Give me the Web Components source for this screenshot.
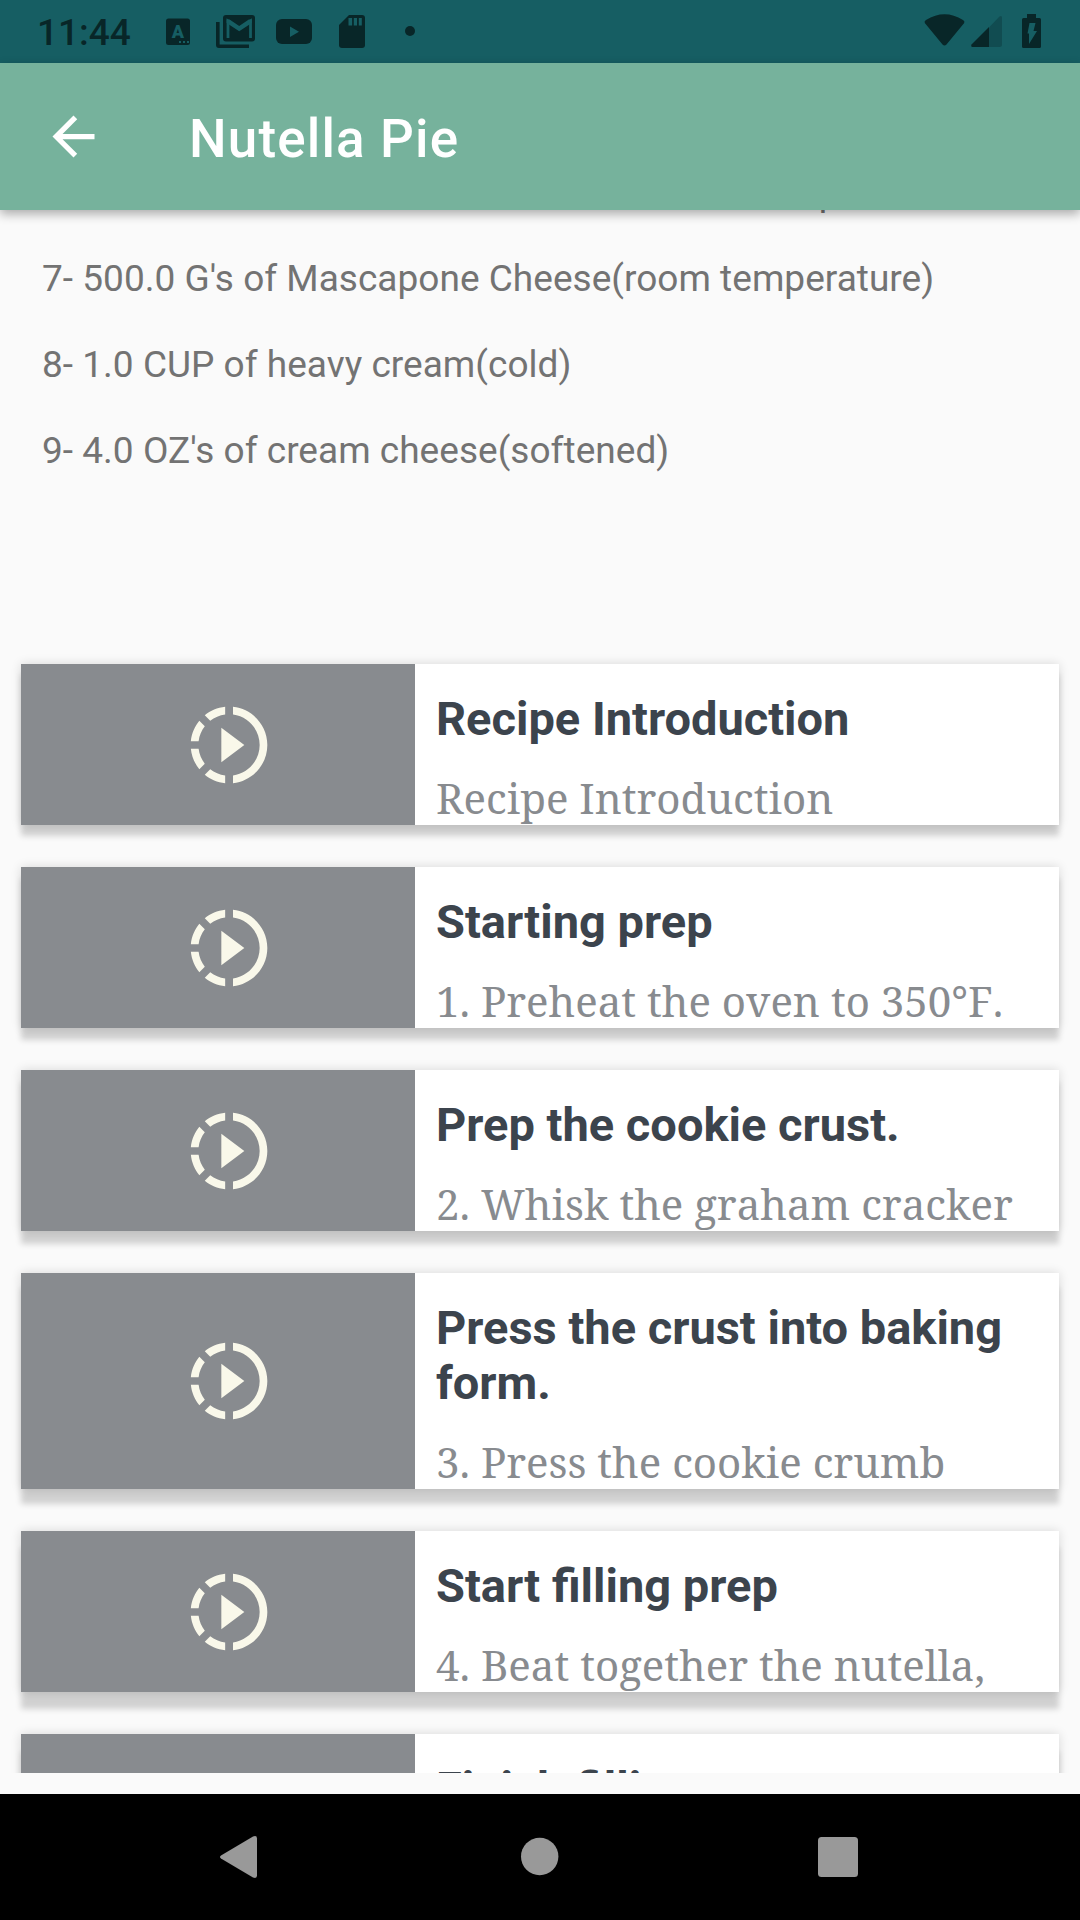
<!DOCTYPE html>
<html lang="en">
<head>
<meta charset="utf-8">
<title>Nutella Pie</title>
<style>
html,body{margin:0;padding:0;background:#fafafa;overflow:hidden}
body{width:1080px;height:1920px;font-family:Roboto,sans-serif}
</style>
</head>
<body>
<recipe-screen></recipe-screen>
<script>
const define = (name, html) => customElements.define(name, class extends HTMLElement {
  constructor() {
    super();
    const t = document.createElement('template');
    t.innerHTML = html;
    this.attachShadow({ mode: 'open' }).appendChild(t.content.cloneNode(true));
  }
});

define('status-bar', `
<style>
:host{display:flex;align-items:flex-start;height:63px;background:#165e63;box-sizing:border-box;padding-left:37px;color:#082628}
.time{width:128px;font:500 37px/43px Roboto,sans-serif;padding-top:11px;white-space:nowrap}
svg{display:block;height:63px;flex:none;fill:#082628}
.space{flex:1}
</style>
<div class="time">11:44</div>
<svg width="51" viewBox="165 0 51 63"><rect x="166" y="18.500" width="24" height="26.500" rx="2.500"/><text x="178" y="38" text-anchor="middle" font-family="Roboto" font-weight="900" font-size="18" fill="#165e63">A</text><path fill="#165e63" d="M179 41h2v2h-2zM183 41h2v2h-2zM187 41h2v2h-2z"/></svg>
<svg width="60" viewBox="216 0 60 63"><path d="M216 22h3.600v22.500H249V48H219q-3 0-3-3z"/><rect x="223" y="15" width="32" height="26.500" rx="3"/><path d="M228 38V21l11.200 7.600L250.500 21v17" fill="none" stroke="#165e63" stroke-width="2.800"/><path fill="#165e63" d="M226.600 19.500h3l9.600 6.500 9.600-6.500h3v3.500l-12.600 8.200-12.600-8.200z"/></svg>
<svg width="63" viewBox="276 0 63 63"><rect x="276" y="19" width="36" height="25" rx="6"/><path fill="#165e63" d="M290 26.500v10.500l9-5.250z"/></svg>
<svg width="66" viewBox="339 0 66 63"><path d="M349 15h13q3 0 3 3v27q0 3-3 3h-20q-3 0-3-3V25z"/><path fill="#165e63" d="M348.500 18h3.600v7.500h-3.600zM353.800 18h3.200v7.500h-3.200zM358.800 18h3v7.500h-3z"/></svg>
<svg width="12" viewBox="405 0 12 63"><circle cx="410" cy="31" r="5"/></svg>
<div class="space"></div>
<svg width="156" viewBox="924 0 156 63">
<path d="M924.800 23Q924 21 926 20Q944.500 8.500 963 20Q965 21 964.200 23L946.500 44.500q-2 2-4 0z"/>
<path opacity=".3" d="M989 27.500l10.500-11q2.500-1.500 2.500 1V44.500q0 2.500-2.500 2.500H989z"/><path d="M989 27V47H972.500q-2-.5-1-2.500z"/>
<path d="M1027 14h9v4h3.500q1.500 0 1.500 1.500v27q0 1.500-1.500 1.500h-16q-1.500 0-1.500-1.500v-27q0-1.500 1.500-1.500h3.500z"/><path fill="#165e63" d="M1029.500 23h6l-2 8h3.500l-8 13v-10.500h-1.500z"/>
</svg>`);

define('app-bar', `
<style>
:host{display:flex;align-items:center;height:147px;box-sizing:border-box;padding-left:42px;background:#76b29c;color:#fff;position:relative;z-index:2;box-shadow:0 4px 10px rgba(0,0,0,.32)}
svg{display:block;width:63px;height:63px;margin-right:84px;fill:#fff}
.t{font:500 53px/62px Roboto,sans-serif;letter-spacing:1.15px;padding-top:4px;white-space:nowrap}
</style>
<svg viewBox="0 0 24 24"><path d="M20 11H7.830l5.590-5.590L12 4l-8 8 8 8 1.410-1.410L7.830 13H20v-2z"/></svg>
<div class="t"><slot></slot></div>`);

define('ingredient-row', `
<style>:host{display:block;height:86px;font:400 37px/43px Roboto,sans-serif;letter-spacing:.025px;color:#737373;white-space:nowrap;padding-left:42px}</style><slot></slot>`);

define('step-card', `
<style>
:host{display:flex;margin:0 21px 42px;background:#fff;flex:none;box-shadow:0 var(--drop,11px) 6px rgba(0,0,0,.165),0 0 10px rgba(0,0,0,.14)}
.media{width:394px;background:#888b8f;display:flex;align-items:center;justify-content:center;padding-left:22px;box-sizing:border-box}
svg{width:92px;height:92px;fill:#f9f8ea}
.text{flex:1;padding:27px 0 0 21px;overflow:hidden}
.title{font:700 47px/55px Roboto,sans-serif;color:#3c444d}
.desc{margin-top:23px;height:56px;font:400 42px/57px "Noto Serif","Droid Serif","DejaVu Serif Condensed","DejaVu Serif",serif;font-kerning:none;color:#888b8f;white-space:nowrap}
</style>
<div class="media"><svg viewBox="0 0 24 24"><path d="M10 7.500v9L16 12zM11 4.070V2.050c-2.010.2-3.840 1-5.320 2.210L7.100 5.690c1.110-.86 2.440-1.440 3.900-1.620zM5.690 7.100L4.260 5.680C3.050 7.160 2.250 8.990 2.050 11h2.020c.18-1.460.76-2.790 1.620-3.900zM4.070 13H2.050c.2 2.010 1 3.840 2.210 5.320l1.430-1.430c-.86-1.100-1.440-2.430-1.620-3.890zm1.610 6.740C7.160 20.950 9 21.750 11 21.950v-2.020c-1.460-.18-2.790-.76-3.900-1.620l-1.420 1.430zM22 12c0 5.160-3.920 9.420-8.950 9.950v-2.020C16.970 19.410 20 16.050 20 12s-3.030-7.410-6.950-7.930V2.050C18.080 2.580 22 6.840 22 12z"/></svg></div>
<div class="text"><div class="title"><slot name="title"></slot></div><div class="desc"><slot></slot></div></div>`);

define('nav-bar', `
<style>
:host{display:flex;height:126px;background:#000;align-items:center;padding-left:219px;gap:259.500px}
svg{display:block;width:40px;height:44px;fill:#999;flex:none}
</style>
<svg viewBox="0 0 40 44"><path d="M2 20.500L34 1.500q4-1.500 4 2v37q0 3.500-4 2L2 23.500q-2-1.500 0-3z"/></svg>
<svg viewBox="0 0 40 44"><circle cx="20.700" cy="21.500" r="18.700"/></svg>
<svg viewBox="0 0 40 44"><rect y="2" width="40" height="40" rx="3.500"/></svg>`);

define('recipe-screen', `
<style>
:host{display:flex;flex-direction:column;width:1080px;height:1920px;background:#fafafa}
.scroll{height:1563px;overflow:hidden;display:flex;flex-direction:column;flex:none}
.list{flex:none;margin-top:-39px;height:493px}
nav-bar{margin-top:21px}
</style>
<status-bar></status-bar>
<app-bar>Nutella Pie</app-bar>
<div class="scroll">
<div class="list">
<ingredient-row style="font-size:36.75px;letter-spacing:.03px">6- 1.0 K of Nutella or other chocolate-hazelnut spread</ingredient-row>
<ingredient-row>7- 500.0 G's of Mascapone Cheese(room temperature)</ingredient-row>
<ingredient-row>8- 1.0 CUP of heavy cream(cold)</ingredient-row>
<ingredient-row>9- 4.0 OZ's of cream cheese(softened)</ingredient-row>
</div>
<step-card><span slot="title">Recipe Introduction</span>Recipe Introduction</step-card>
<step-card style="--drop:12px"><span slot="title">Starting prep</span>1. Preheat the oven to 350°F.</step-card>
<step-card style="--drop:13px"><span slot="title">Prep the cookie crust.</span>2. Whisk the graham cracker</step-card>
<step-card style="--drop:15px"><span slot="title">Press the crust into baking form.</span>3. Press the cookie crumb</step-card>
<step-card style="--drop:17px"><span slot="title">Start filling prep</span>4. Beat together the nutella,</step-card>
<step-card style="--drop:18px"><span slot="title">Finish filling prep</span></step-card>
</div>
<nav-bar></nav-bar>`);
</script>
</body>
</html>
